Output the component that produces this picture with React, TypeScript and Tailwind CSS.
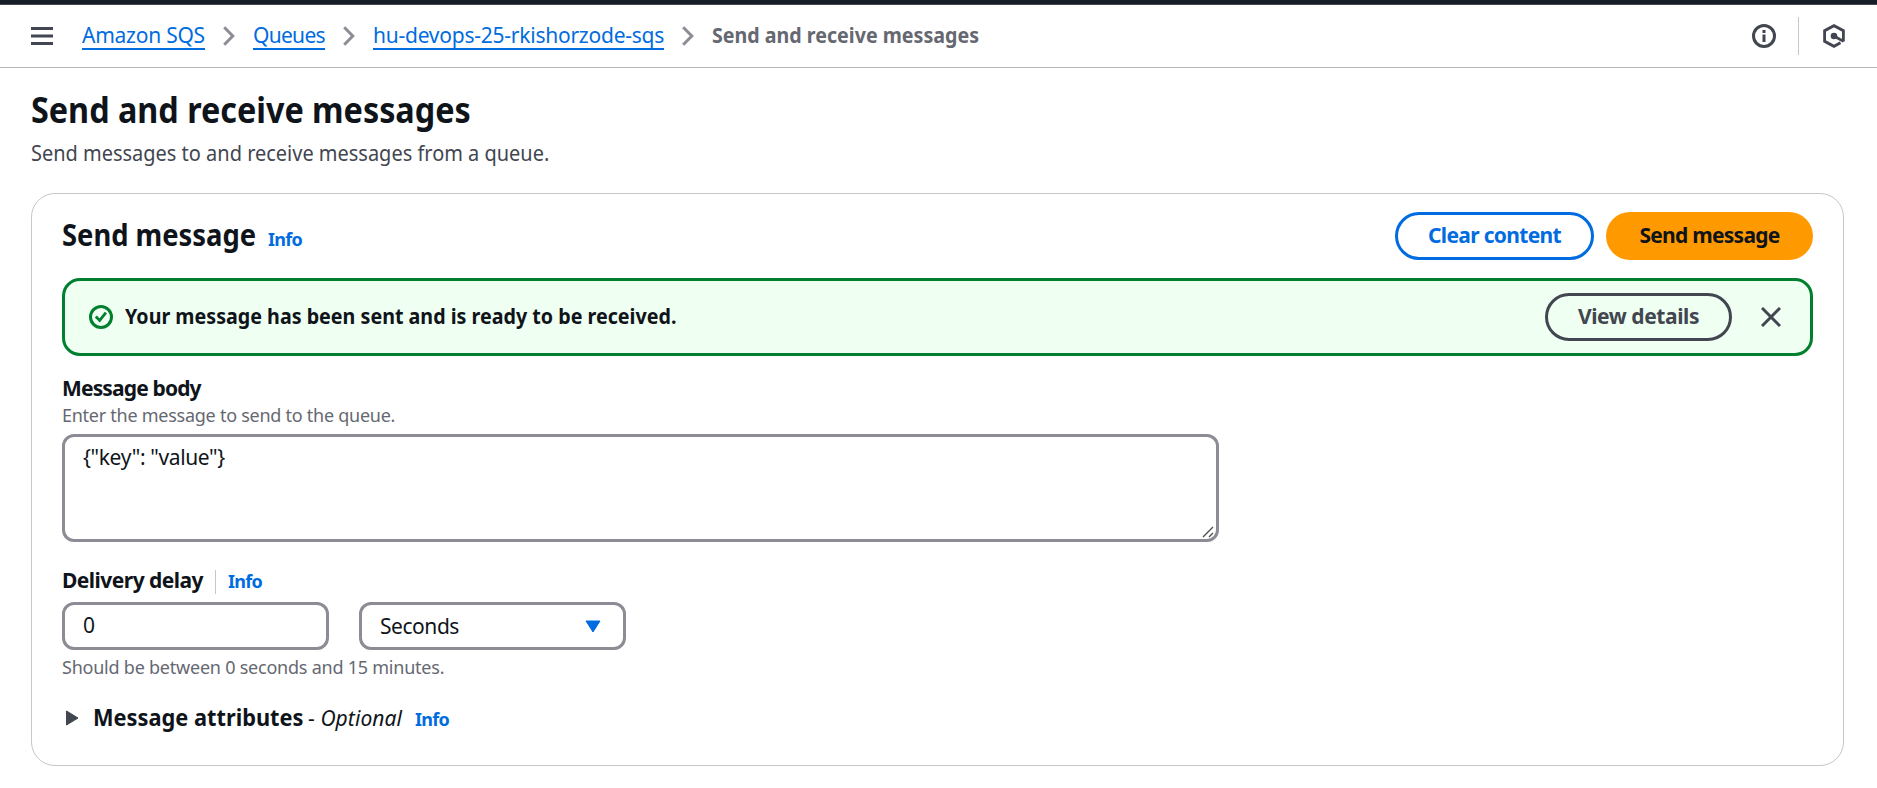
import type { ReactNode } from "react";

function Info({ className = "" }: { className?: string }) {
  return (
    <a className={`text-[18px] leading-[24px] font-bold tracking-[-0.7px] text-[#006ce0] ${className}`}>Info</a>
  );
}

function Crumb({ children, className }: { children: ReactNode; className: string }) {
  return (
    <a className={`h-[28px] shrink-0 border-b-2 border-[#006ce0] leading-[26px] whitespace-nowrap text-[#006ce0] ${className}`}>
      {children}
    </a>
  );
}

function Chevron() {
  return (
    <svg className="mx-[18px] h-[20px] w-[12px] shrink-0" viewBox="0 0 12 20" fill="none" stroke="#8c8c94" strokeWidth="3">
      <path d="M1.2 1.2 9.8 10 1.2 18.8" />
    </svg>
  );
}

export default function App() {
  return (
    <div className="h-[788px] w-full overflow-hidden bg-white text-[21px] leading-[30px] text-[#0f141a] [font-family:'Noto_Sans',sans-serif]">
      <div className="h-[5px] border-b border-[#424650] bg-[#161d26]" />
      <header className="flex h-[63px] items-center border-b border-[#b4b4bb] pr-[32px] pl-[31px]">
        <svg className="mr-[29px] h-[18px] w-[22px] shrink-0" viewBox="0 0 22 18" fill="#424650">
          <rect width="22" height="3" />
          <rect y="7.5" width="22" height="3" />
          <rect y="15" width="22" height="3" />
        </svg>
        <nav className="flex items-center">
          <Crumb className="w-[123px] tracking-[-0.24px]">Amazon SQS</Crumb>
          <Chevron />
          <Crumb className="w-[72px] tracking-[-0.7px]">Queues</Crumb>
          <Chevron />
          <Crumb className="w-[291px] tracking-[-0.24px]">hu-devops-25-rkishorzode-sqs</Crumb>
          <Chevron />
          <span className="h-[30px] origin-left scale-x-[0.935] leading-[28px] font-bold whitespace-nowrap text-[#656871]">
            Send and receive messages
          </span>
        </nav>
        <svg className="ml-auto h-[24px] w-[24px]" viewBox="0 0 24 24" fill="none">
          <circle cx="12" cy="12" r="10.5" stroke="#424650" strokeWidth="3" />
          <path d="M10.5 6h3v3h-3zM10.5 10.5h3v7.500h-3z" fill="#424650" />
        </svg>
        <div className="ml-[22px] h-[38px] w-px bg-[#c6c6cd]" />
        <svg className="ml-[24px] h-[24px] w-[22px]" viewBox="0 0 22 24" fill="none" stroke="#424650" strokeWidth="2.800">
          <path d="M20.400 17.500V6.700L11 1.700 1.600 6.700v10.600L11 22.300l6.500-3.500" />
          <path d="M11 12 20.500 17.400" strokeWidth="2.800" />
          <circle cx="11" cy="12" r="3.300" fill="#424650" stroke="none" />
        </svg>
      </header>

      <main className="pr-[33px] pl-[31px] pt-[19px]">
        <h1 className="w-[490px] origin-left scale-x-[0.898] text-[36px] leading-[45px] font-bold whitespace-nowrap">
          Send and receive messages
        </h1>
        <p className="mt-[6px] origin-left scale-x-[0.951] text-[#424650]">Send messages to and receive messages from a queue.</p>

        <section className="mt-[25px] h-[573px] rounded-[24px] border border-[#c6c6cd] px-[30px] pt-[18px]">
          <div className="flex h-[48px] items-center">
            <h2 className="mb-[3px] w-[206px] text-[30px] leading-[36px] whitespace-nowrap">
              <span className="inline-block origin-left scale-x-[0.912] font-bold">Send message</span>
            </h2>
            <Info className="mt-[6px]" />
            <button className="ml-auto h-[48px] w-[199px] rounded-full border-[3px] border-[#006ce0] pb-[2px] font-bold tracking-[-0.67px] text-[#006ce0]">
              Clear content
            </button>
            <button className="ml-[12px] h-[48px] w-[207px] rounded-full bg-[#ff9900] pb-[2px] font-bold tracking-[-0.73px]">
              Send message
            </button>
          </div>

          <div className="mt-[18px] flex h-[78px] items-center rounded-[18px] border-[3px] border-[#00802f] bg-[#effff1] pr-[29px] pl-[24px]">
            <svg className="h-[24px] w-[24px] shrink-0" viewBox="0 0 24 24" fill="none" stroke="#00802f" strokeWidth="3">
              <circle cx="12" cy="12" r="10.500" />
              <path d="m6.800 11.500 3.900 3.900 6.200-7.700" strokeWidth="2.800" />
            </svg>
            <span className="mb-[2px] ml-[12px] origin-left scale-x-[0.937] font-bold whitespace-nowrap">
              Your message has been sent and is ready to be received.
            </span>
            <button className="ml-auto h-[48px] w-[187px] rounded-full border-[3px] border-[#424650] pb-[2px] font-bold tracking-[-0.42px] text-[#424650]">
              View details
            </button>
            <svg className="ml-[29px] h-[20px] w-[20px]" viewBox="0 0 20 20" fill="none" stroke="#424650" strokeWidth="3">
              <path d="m1 1 18 18M19 1 1 19" />
            </svg>
          </div>

          <div className="mt-[17px] font-bold tracking-[-0.85px]">Message body</div>
          <div className="text-[18px] leading-[24px] tracking-[-0.26px] text-[#656871]">Enter the message to send to the queue.</div>
          <div className="mt-[7px] flex h-[108px] w-[1157px] rounded-[12px] border-[3px] border-[#8c8c94] pt-[5px] pr-[1px] pl-[18px] tracking-[-0.38px]">
            {'{"key": "value"}'}
            <svg className="mr-[1px] mb-[1px] ml-auto h-[12px] w-[12px] self-end" viewBox="0 0 12 12" stroke="#4a4a4a" strokeWidth="1.300">
              <path d="M1 11 11 1M7 11l4-4" />
            </svg>
          </div>

          <div className="mt-[23px] flex items-center">
            <span className="w-[153px] font-bold tracking-[-0.53px] whitespace-nowrap">Delivery delay</span>
            <div className="mt-[4px] h-[24px] w-px bg-[#c6c6cd]" />
            <Info className="mt-[2px] ml-[12px]" />
          </div>
          <div className="mt-[7px] flex gap-[30px]">
            <div className="h-[48px] w-[267px] rounded-[12px] border-[3px] border-[#8c8c94] pl-[18px] leading-[41px]">0</div>
            <div className="flex h-[48px] w-[267px] items-center justify-between rounded-[12px] border-[3px] border-[#8c8c94] pr-[22px] pl-[18px] tracking-[-0.45px]">
              <span className="mb-[1px]">Seconds</span>
              <svg className="h-[13px] w-[16px]" viewBox="0 0 16 13" fill="#006ce0" stroke="#006ce0" strokeLinejoin="round">
                <path d="M1 1h14L8 12z" />
              </svg>
            </div>
          </div>
          <div className="mt-[5px] text-[18px] leading-[24px] tracking-[-0.23px] text-[#656871]">
            Should be between 0 seconds and 15 minutes.
          </div>

          <div className="mt-[23px] flex items-baseline pl-[4px] whitespace-nowrap">
            <svg className="mr-[14px] h-[16px] w-[13px] shrink-0" viewBox="0 0 13 16" fill="#424650" stroke="#424650" strokeLinejoin="round">
              <path d="M.5 1v14L12 8z" />
            </svg>
            <span className="w-[215px] text-[24px]">
              <span className="inline-block origin-left scale-x-[0.908] font-bold">Message attributes</span>
            </span>
            <span className="w-[107px] tracking-[0.08px]">- <i>Optional</i></span>
            <Info />
          </div>
        </section>
      </main>
    </div>
  );
}
